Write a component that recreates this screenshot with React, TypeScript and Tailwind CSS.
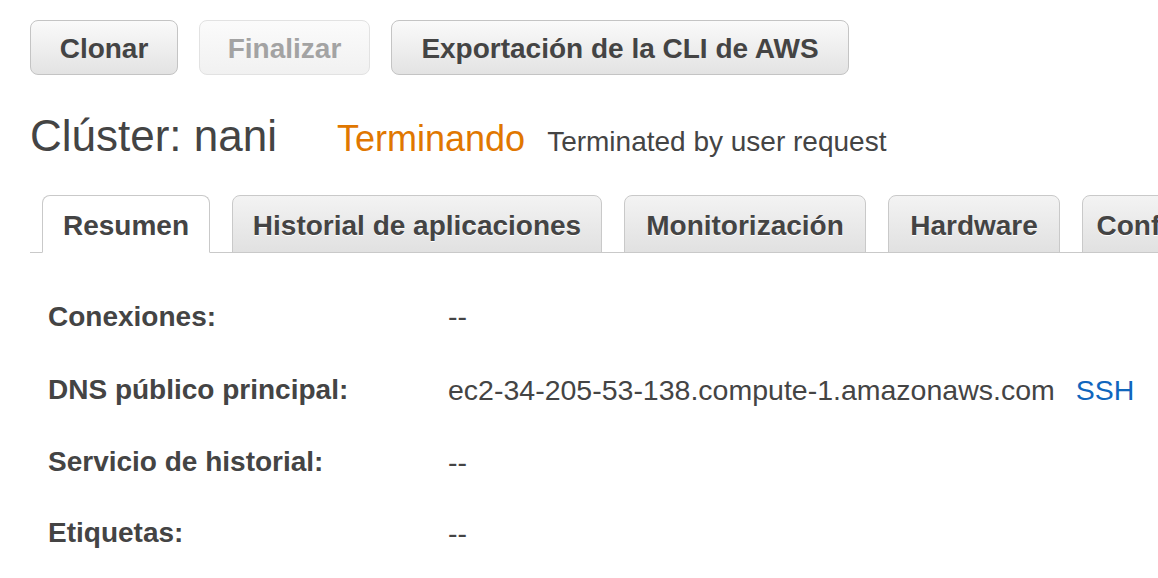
import { ReactNode } from 'react';

const tabs = [
  { label: 'Resumen', width: 'w-[168px]', active: true },
  { label: 'Historial de aplicaciones', width: 'w-[370px]' },
  { label: 'Monitorización', width: 'w-[242px]' },
  { label: 'Hardware', width: 'w-[172px]' },
  { label: 'Configuraciones', width: 'w-[250px]' },
];

const rows: { label: string; value: ReactNode; h: string }[] = [
  { label: 'Conexiones:', value: '--', h: 'h-[73px]' },
  {
    label: 'DNS público principal:',
    value: (
      <>
        ec2-34-205-53-138.compute-1.amazonaws.com
        <a className="ml-[21px] text-[#1066bd]">SSH</a>
      </>
    ),
    h: 'h-[74px]',
  },
  { label: 'Servicio de historial:', value: '--', h: 'h-[70px]' },
  { label: 'Etiquetas:', value: '--', h: 'h-[72px]' },
];

export default function App() {
  return (
    <div className="w-[1158px] h-[578px] overflow-hidden bg-white text-[#444] font-['Liberation_Sans',Arial,sans-serif]">
      <div className="flex gap-[21px] pl-[30px] pt-[20px]">
        <button className="w-[148px] h-[55px] pt-[3px] rounded-[8px] border border-[#c4c4c4] bg-gradient-to-b from-[#fafafa] to-[#e3e3e3] text-[28px] font-bold text-[#444]">
          Clonar
        </button>
        <button
          disabled
          className="w-[171px] h-[55px] pt-[3px] rounded-[8px] border border-[#e2e2e2] bg-gradient-to-b from-[#fbfbfb] to-[#f1f1f1] text-[28px] font-bold text-[#a3a3a3]"
        >
          Finalizar
        </button>
        <button className="w-[458px] h-[55px] pt-[3px] rounded-[8px] border border-[#c4c4c4] bg-gradient-to-b from-[#fafafa] to-[#e3e3e3] text-[28px] font-bold text-[#444]">
          Exportación de la CLI de AWS
        </button>
      </div>

      <div className="flex items-baseline pl-[30px] mt-[36px] h-[50px] leading-[50px]">
        <h1 className="text-[44px] font-normal">Clúster: nani</h1>
        <span className="ml-[60px] text-[36px] text-[#e07700]">Terminando</span>
        <span className="ml-[22px] text-[28px]">Terminated by user request</span>
      </div>

      <div className="ml-[30px] mt-[34px] flex gap-[22px] pl-[12px] border-b border-[#c9c9c9]">
        {tabs.map((t) => (
          <div
            key={t.label}
            className={
              'shrink-0 h-[58px] pt-[3px] -mb-px flex items-center justify-center rounded-t-[8px] border text-[28px] font-bold ' +
              t.width +
              (t.active
                ? ' bg-white border-[#c9c9c9] border-b-white'
                : ' border-[#c9c9c9] bg-gradient-to-b from-[#f3f3f3] to-[#e1e1e1] [text-shadow:0_1px_0_#fff]')
            }
          >
            {t.label}
          </div>
        ))}
      </div>

      <div className="mt-[27px] pl-[48px] grid grid-cols-[400px_1fr]">
        {rows.map((r) => (
          <div key={r.label} className="contents">
            <div className={r.h + ' flex items-center text-[28px] font-bold'}>{r.label}</div>
            <div className={r.h + ' flex items-center text-[28.5px] whitespace-nowrap'}>{r.value}</div>
          </div>
        ))}
      </div>
    </div>
  );
}
